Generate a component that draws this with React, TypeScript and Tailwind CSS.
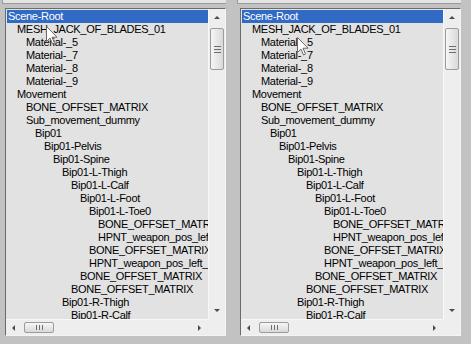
import React from "react"

type Row = { level: number; label: string; selected?: boolean }

const rows: Row[] = [
  { level: 0, label: "Scene-Root", selected: true },
  { level: 1, label: "MESH_JACK_OF_BLADES_01" },
  { level: 2, label: "Material-_5" },
  { level: 2, label: "Material-_7" },
  { level: 2, label: "Material-_8" },
  { level: 2, label: "Material-_9" },
  { level: 1, label: "Movement" },
  { level: 2, label: "BONE_OFFSET_MATRIX" },
  { level: 2, label: "Sub_movement_dummy" },
  { level: 3, label: "Bip01" },
  { level: 4, label: "Bip01-Pelvis" },
  { level: 5, label: "Bip01-Spine" },
  { level: 6, label: "Bip01-L-Thigh" },
  { level: 7, label: "Bip01-L-Calf" },
  { level: 8, label: "Bip01-L-Foot" },
  { level: 9, label: "Bip01-L-Toe0" },
  { level: 10, label: "BONE_OFFSET_MATRIX" },
  { level: 10, label: "HPNT_weapon_pos_left" },
  { level: 9, label: "BONE_OFFSET_MATRIX" },
  { level: 9, label: "HPNT_weapon_pos_left_" },
  { level: 8, label: "BONE_OFFSET_MATRIX" },
  { level: 7, label: "BONE_OFFSET_MATRIX" },
  { level: 6, label: "Bip01-R-Thigh" },
  { level: 7, label: "Bip01-R-Calf" },
]

const Arrow = ({ dir }: { dir: "up" | "down" | "left" | "right" }) => {
  const pts = {
    up: "1,5 4,2 7,5",
    down: "1,2 4,5 7,2",
    left: "5,1 2,4 5,7",
    right: "2,1 5,4 2,7",
  }[dir]
  return (
    <svg width="8" height="8" viewBox="0 0 8 8">
      <polygon points={pts} fill="#4d4d4d" />
    </svg>
  )
}

const Cursor = ({ className }: { className: string }) => (
  <svg className={className} width="12" height="19" viewBox="0 0 12 19">
    <path d="M0.5 0.5 L0.5 15.5 L4 12 L6.5 18 L8.5 17 L6 11.2 L11 11.2 Z" fill="#ffffff" stroke="#6a6a6a" strokeWidth="1" />
  </svg>
)

const Panel = ({ cursor }: { cursor: string }) => (
  <div className="flex w-[221px] flex-col">
    <div className="h-[4px] border-b border-l border-[#9a9a9a] bg-[#e4e4e4] ml-[-3px]" />
    <div className="mt-[4px] grid h-[328px] grid-cols-[1fr_17px] grid-rows-[1fr_16px] border-l border-t border-[#6b6b6b] border-b border-r border-b-[#f4f4f4] border-r-[#f4f4f4] bg-[#e2e2e2]">
      <div className="relative overflow-hidden pl-[1px] pt-[1px]">
        {rows.map((r, i) => (
          <div
            key={i}
            className={
              "h-[13px] whitespace-nowrap text-[11px] leading-[13px] tracking-[-0.3px] " +
              (r.selected ? "bg-[#316ac5] text-white" : "text-black")
            }
            style={{ paddingLeft: 1 + r.level * 9 }}
          >
            {r.label}
          </div>
        ))}
        <Cursor className={cursor} />
      </div>
      <div className="flex flex-col items-center bg-[#eeeeee] border-l border-[#f8f8f8]">
        <div className="flex h-[16px] w-full items-center justify-center pt-[1px]">
          <Arrow dir="up" />
        </div>
        <div className="mt-[3px] flex h-[42px] w-[14px] items-center justify-center rounded-[2px] border border-[#9c9c9c] bg-gradient-to-r from-[#f6f6f6] to-[#d9d9d9]">
          <div className="flex flex-col gap-[2px]">
            <div className="h-px w-[7px] bg-[#6e6e6e]" />
            <div className="h-px w-[7px] bg-[#6e6e6e]" />
            <div className="h-px w-[7px] bg-[#6e6e6e]" />
          </div>
        </div>
        <div className="flex-1" />
        <div className="flex h-[16px] w-full items-center justify-center">
          <Arrow dir="down" />
        </div>
      </div>
      <div className="flex items-center bg-[#eeeeee] border-t border-[#f8f8f8]">
        <div className="flex h-full w-[16px] items-center justify-center">
          <Arrow dir="left" />
        </div>
        <div className="ml-[2px] flex h-[11px] w-[30px] items-center justify-center gap-[2px] rounded-[2px] border border-[#9c9c9c] bg-gradient-to-b from-[#f6f6f6] to-[#d9d9d9]">
          <div className="h-[5px] w-px bg-[#6e6e6e]" />
          <div className="h-[5px] w-px bg-[#6e6e6e]" />
          <div className="h-[5px] w-px bg-[#6e6e6e]" />
        </div>
        <div className="flex-1" />
        <div className="flex h-full w-[16px] items-center justify-center">
          <Arrow dir="right" />
        </div>
      </div>
      <div className="bg-[#eeeeee]" />
    </div>
  </div>
)

export default function App() {
  return (
    <div
      className="flex h-[344px] w-[471px] gap-[14px] bg-[#c2c2c2] pl-[5px]"
      style={{ fontFamily: '"Liberation Sans", Arial, sans-serif' }}
    >
      <Panel cursor="absolute left-[40px] top-[17px]" />
      <Panel cursor="absolute left-[56px] top-[28px]" />
    </div>
  )
}
